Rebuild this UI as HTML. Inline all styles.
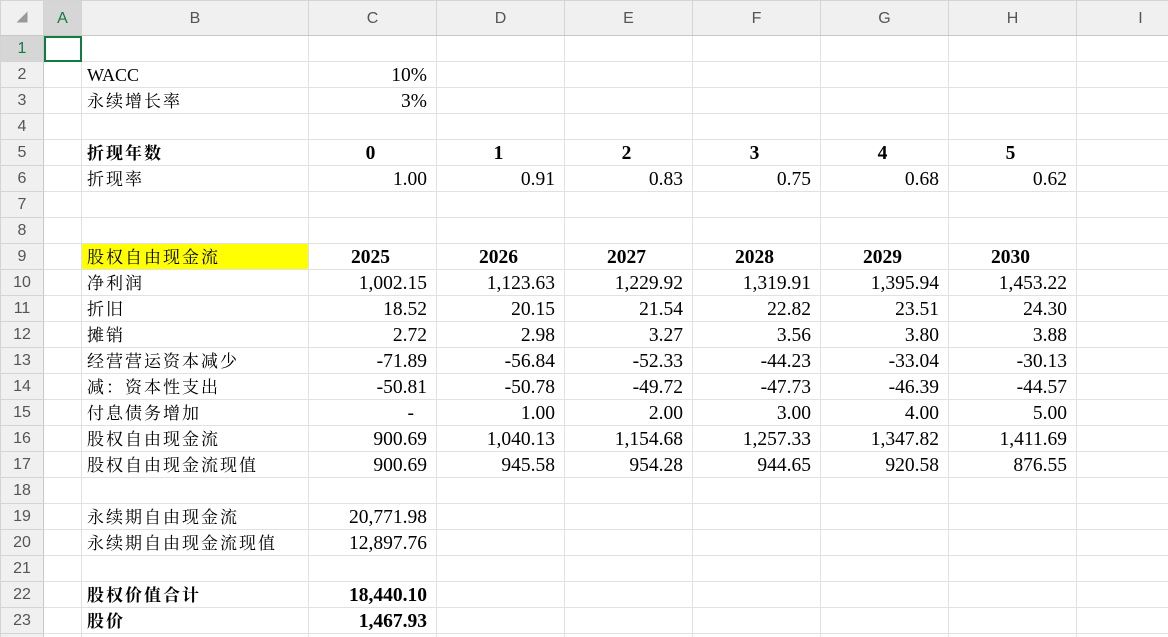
<!DOCTYPE html>
<html><head><meta charset="utf-8"><style>
html,body{margin:0;padding:0;background:#fff;width:1168px;height:637px;overflow:hidden;position:relative}
table{border-collapse:collapse;table-layout:fixed;position:absolute;left:0;top:0;width:1204px}
td{box-sizing:border-box;height:26px;border:1px solid #e1e1e1;padding:1px 9px 0 5px;font-family:"Liberation Serif","Noto Serif CJK SC",serif;font-size:19.5px;color:#000;white-space:nowrap;overflow:hidden;line-height:23px}
td.h{background:#f0f0f0;color:#555;font-family:"Liberation Sans","Noto Sans CJK SC",sans-serif;text-align:center;font-size:16px;padding:0;border-color:#d4d4d4}
tr.hd td{height:35px;border-bottom:1px solid #c8c8c8}
td.rn{background:#f0f0f0;color:#555;font-family:"Liberation Sans",sans-serif;text-align:center;font-size:16px;padding:0;border-color:#d4d4d4;border-right:1px solid #c8c8c8}
td.sel{background:#d6d6d6;color:#107c41}
td.r{text-align:right}
td.c{text-align:center}
td.cn{letter-spacing:2px;font-size:17px}
b{font-weight:bold}
.y{background:#ffff00}
</style></head><body>
<table>
<colgroup><col style="width:43px"><col style="width:38px"><col style="width:227px"><col style="width:128px"><col style="width:128px"><col style="width:128px"><col style="width:128px"><col style="width:128px"><col style="width:128px"><col style="width:128px"></colgroup>
<tr class="hd"><td class="h" style="color:#999;font-size:11px">◢</td><td class="h sel">A</td><td class="h">B</td><td class="h">C</td><td class="h">D</td><td class="h">E</td><td class="h">F</td><td class="h">G</td><td class="h">H</td><td class="h">I</td></tr>
<tr><td class="rn sel">1</td><td style="outline:2px solid #107c41;outline-offset:-2px"></td><td></td><td></td><td></td><td></td><td></td><td></td><td></td><td></td></tr>
<tr><td class="rn">2</td><td></td><td style="font-size:18px">WACC</td><td class="r">10%</td><td></td><td></td><td></td><td></td><td></td><td></td></tr>
<tr><td class="rn">3</td><td></td><td class="cn">永续增长率</td><td class="r">3%</td><td></td><td></td><td></td><td></td><td></td><td></td></tr>
<tr><td class="rn">4</td><td></td><td></td><td></td><td></td><td></td><td></td><td></td><td></td><td></td></tr>
<tr><td class="rn">5</td><td></td><td class="cn"><b>折现年数</b></td><td class="c"><b>0</b></td><td class="c"><b>1</b></td><td class="c"><b>2</b></td><td class="c"><b>3</b></td><td class="c"><b>4</b></td><td class="c"><b>5</b></td><td></td></tr>
<tr><td class="rn">6</td><td></td><td class="cn">折现率</td><td class="r">1.00</td><td class="r">0.91</td><td class="r">0.83</td><td class="r">0.75</td><td class="r">0.68</td><td class="r">0.62</td><td></td></tr>
<tr><td class="rn">7</td><td></td><td></td><td></td><td></td><td></td><td></td><td></td><td></td><td></td></tr>
<tr><td class="rn">8</td><td></td><td></td><td></td><td></td><td></td><td></td><td></td><td></td><td></td></tr>
<tr><td class="rn">9</td><td></td><td class="cn y">股权自由现金流</td><td class="c"><b>2025</b></td><td class="c"><b>2026</b></td><td class="c"><b>2027</b></td><td class="c"><b>2028</b></td><td class="c"><b>2029</b></td><td class="c"><b>2030</b></td><td></td></tr>
<tr><td class="rn">10</td><td></td><td class="cn">净利润</td><td class="r">1,002.15</td><td class="r">1,123.63</td><td class="r">1,229.92</td><td class="r">1,319.91</td><td class="r">1,395.94</td><td class="r">1,453.22</td><td></td></tr>
<tr><td class="rn">11</td><td></td><td class="cn">折旧</td><td class="r">18.52</td><td class="r">20.15</td><td class="r">21.54</td><td class="r">22.82</td><td class="r">23.51</td><td class="r">24.30</td><td></td></tr>
<tr><td class="rn">12</td><td></td><td class="cn">摊销</td><td class="r">2.72</td><td class="r">2.98</td><td class="r">3.27</td><td class="r">3.56</td><td class="r">3.80</td><td class="r">3.88</td><td></td></tr>
<tr><td class="rn">13</td><td></td><td class="cn">经营营运资本减少</td><td class="r">-71.89</td><td class="r">-56.84</td><td class="r">-52.33</td><td class="r">-44.23</td><td class="r">-33.04</td><td class="r">-30.13</td><td></td></tr>
<tr><td class="rn">14</td><td></td><td class="cn">减：资本性支出</td><td class="r">-50.81</td><td class="r">-50.78</td><td class="r">-49.72</td><td class="r">-47.73</td><td class="r">-46.39</td><td class="r">-44.57</td><td></td></tr>
<tr><td class="rn">15</td><td></td><td class="cn">付息债务增加</td><td class="r" style="padding-right:22px">-</td><td class="r">1.00</td><td class="r">2.00</td><td class="r">3.00</td><td class="r">4.00</td><td class="r">5.00</td><td></td></tr>
<tr><td class="rn">16</td><td></td><td class="cn">股权自由现金流</td><td class="r">900.69</td><td class="r">1,040.13</td><td class="r">1,154.68</td><td class="r">1,257.33</td><td class="r">1,347.82</td><td class="r">1,411.69</td><td></td></tr>
<tr><td class="rn">17</td><td></td><td class="cn">股权自由现金流现值</td><td class="r">900.69</td><td class="r">945.58</td><td class="r">954.28</td><td class="r">944.65</td><td class="r">920.58</td><td class="r">876.55</td><td></td></tr>
<tr><td class="rn">18</td><td></td><td></td><td></td><td></td><td></td><td></td><td></td><td></td><td></td></tr>
<tr><td class="rn">19</td><td></td><td class="cn">永续期自由现金流</td><td class="r">20,771.98</td><td></td><td></td><td></td><td></td><td></td><td></td></tr>
<tr><td class="rn">20</td><td></td><td class="cn">永续期自由现金流现值</td><td class="r">12,897.76</td><td></td><td></td><td></td><td></td><td></td><td></td></tr>
<tr><td class="rn">21</td><td></td><td></td><td></td><td></td><td></td><td></td><td></td><td></td><td></td></tr>
<tr><td class="rn">22</td><td></td><td class="cn"><b>股权价值合计</b></td><td class="r"><b>18,440.10</b></td><td></td><td></td><td></td><td></td><td></td><td></td></tr>
<tr><td class="rn">23</td><td></td><td class="cn"><b>股价</b></td><td class="r"><b>1,467.93</b></td><td></td><td></td><td></td><td></td><td></td><td></td></tr>
<tr><td class="rn">24</td><td></td><td></td><td></td><td></td><td></td><td></td><td></td><td></td><td></td></tr>
</table>
</body></html>
